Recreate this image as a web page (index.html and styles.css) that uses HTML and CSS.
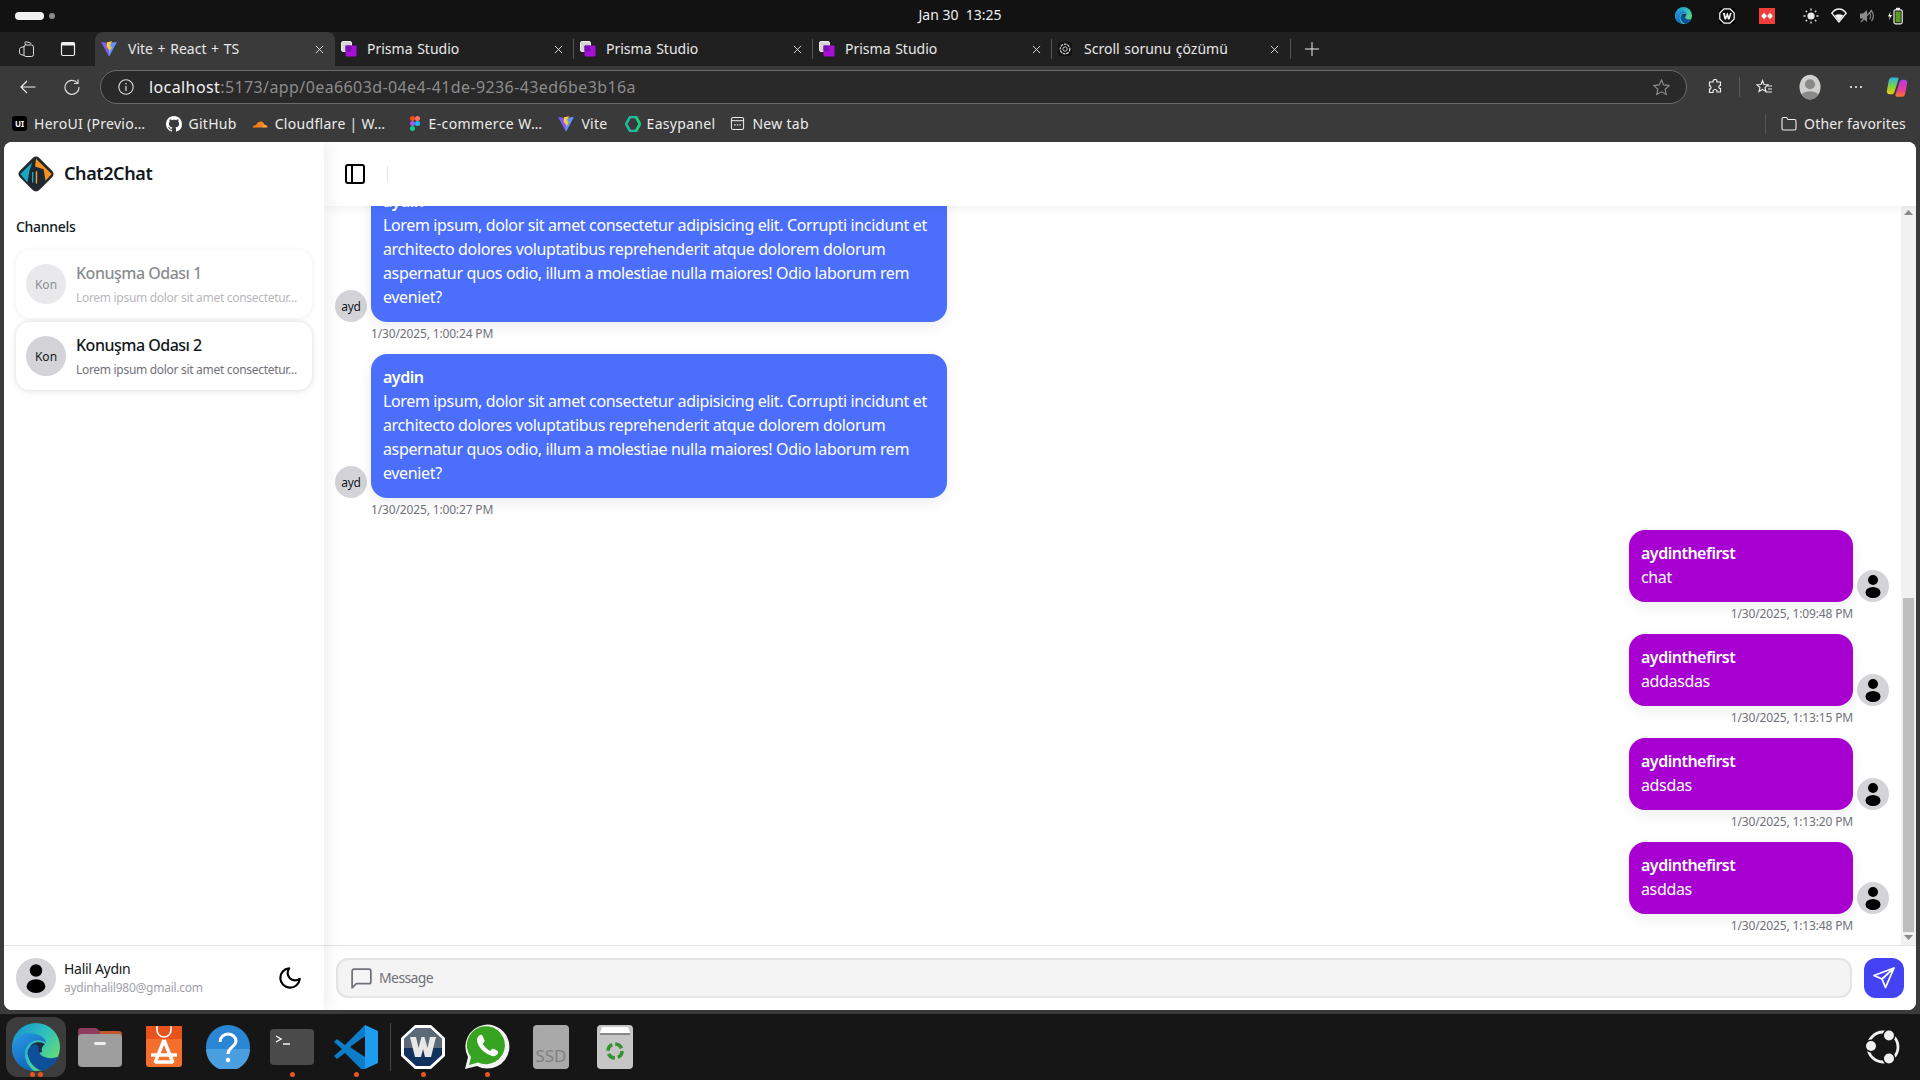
FILE: index.html
```html
<!DOCTYPE html>
<html lang="en">
<head>
<meta charset="utf-8">
<title>Chat2Chat</title>
<link rel="stylesheet" href="styles.css">
</head>
<body>
<svg class="defs" width="0" height="0">
  <defs>
    <linearGradient id="edgeA" x1="0" y1="0" x2="1" y2=".8"><stop offset="0" stop-color="#128fd6"/><stop offset=".55" stop-color="#32c2b8"/><stop offset="1" stop-color="#6fdf6a"/></linearGradient>
    <linearGradient id="edgeB" x1="0" y1="0" x2=".6" y2="1"><stop offset="0" stop-color="#2a9ae6"/><stop offset="1" stop-color="#0f62b8"/></linearGradient>
  </defs>
  <symbol id="vite" viewBox="0 0 16 16">
    <path d="M15.6 1.6 8.4 15a.5.5 0 0 1-.8 0L.4 1.6c-.2-.4.1-.8.5-.7L8 2.2l7.1-1.3c.4-.1.7.3.5.7z" fill="#7f5cf5"/>
    <path d="M8 2.2 15.1.9c.4-.1.7.3.5.7L8.4 15 8 14z" fill="#5aa8ff" opacity=".7"/>
    <path d="M11.3.2 6 1.2l-.3 5.6 1.500-.3-.3 2 1.500-.4-.4 3 3-5-1.700.3.600-2.100-1.600.3z" fill="#ffd028"/>
  </symbol>
  <symbol id="prisma" viewBox="0 0 16 16">
    <rect x=".5" y=".5" width="10" height="10" rx="1.5" fill="#d5d5d5" stroke="#eee"/>
    <rect x="4.5" y="4.5" width="11" height="11" rx="1" fill="#a80fd8"/>
    <rect x="4.5" y="4.5" width="6" height="6" fill="#7a10b0"/>
  </symbol>
  <symbol id="user" viewBox="0 0 24 24">
    <circle cx="12" cy="6" r="5" fill="#000"/>
    <ellipse cx="12" cy="18.500" rx="7.500" ry="5.500" fill="#000"/>
  </symbol>
  <symbol id="close" viewBox="0 0 10 10">
    <path d="M1 1l8 8M9 1l-8 8" stroke="#e8e8e8" stroke-width="1" fill="none"/>
  </symbol>
  <symbol id="edge" viewBox="0 0 48 48">
    <circle cx="24" cy="24" r="24" fill="url(#edgeA)"/>
    <path d="M18 24C20 19 28 18 33 21 30 23 29 26 30 29l-6 2C20 31 18 27 18 24z" fill="#1a2c44"/>
    <path d="M24 21c-6 1-10 6-8 12 2 8 8 13 14 15 8-2 14-8 17-15-5 3-13 3-18-1-2-2-3-4-2-7z" fill="#0e4f9a"/>
    <path d="M0 25C1 13 13 8 24 11c7 2 10 6 10 9C28 15 18 17 14 25c-3 7 0 17 8 23C9 47 0 37 0 25z" fill="url(#edgeB)"/>
  </symbol>
</svg>

<div class="topbar">
  <div class="workspaces"><span class="ws-pill"></span><span class="ws-dot"></span></div>
  <div class="clock">Jan 30&nbsp;&nbsp;13:25</div>
  <div class="tray">
    <svg class="tray-edge" width="17" height="17"><use href="#edge"/></svg>
    <svg class="tray-w" viewBox="0 0 16 16" width="16" height="16"><rect width="16" height="16" fill="#000"/><path d="M5 .8h6L15.200 5v6L11 15.200H5L.8 11V5z" fill="#111" stroke="#fff" stroke-width="1.200"/><path d="M3.800 5h2l1 3.800L8 5h.8l1.100 3.800L11 5h1.600l-2 6.500H9L8 8.600 7.200 11.500H5.600z" fill="#fff"/></svg>
    <svg class="tray-red" viewBox="0 0 16 16" width="16" height="16"><rect width="16" height="16" fill="#f23e3a"/><path d="M5 4.800 8 8l-3 3.200L2.200 8zM11 4.800 13.800 8 11 11.200 8.200 8z" fill="#fff"/></svg>
    <svg viewBox="0 0 16 16" width="16" height="16"><circle cx="8" cy="8" r="3.600" fill="#e9e9e9"/><path d="M8 .5v2M8 13.500v2M.5 8h2M13.500 8h2M2.700 2.700l1.400 1.400M11.900 11.900l1.400 1.400M2.700 13.300l1.400-1.400M11.900 4.100l1.400-1.400" stroke="#e9e9e9" stroke-width="1.300"/></svg>
    <svg viewBox="0 0 16 16" width="16" height="16"><path d="M8 14 .8 5.200C5-.4 11-.4 15.200 5.200z" fill="none" stroke="#f0f0f0" stroke-width="1.400"/><path d="M8 13 3.800 7.500c2.500-1.800 5.900-1.800 8.400 0z" fill="#f0f0f0"/></svg>
    <svg viewBox="0 0 16 16" width="16" height="16"><path d="M1 5.500h3L8 2v12L4 10.500H1z" fill="#8c8c8c"/><path d="M10.500 5c1.400 1.600 1.400 4.400 0 6M12.500 3c2.400 2.800 2.400 7.200 0 10M2 14 13 2" stroke="#8c8c8c" stroke-width="1.200" fill="none"/></svg>
    <svg viewBox="0 0 16 18" width="16" height="18"><path d="M3.500 4.500 1 9.500h2L1.800 13.500 5 8H3z" fill="#fff"/><rect x="7" y="2.800" width="8.200" height="14" rx="1.500" fill="none" stroke="#eee" stroke-width="1.200"/><rect x="9" y=".8" width="4" height="2" fill="#eee"/><rect x="8.500" y="4.500" width="5.200" height="10.800" fill="#5a9c1e"/></svg>
  </div>
</div>

<div class="browser">
  <div class="tabbar">
    <div class="tab-tools">
      <svg viewBox="0 0 16 16" width="16" height="16"><rect x="6" y="4" width="9.500" height="11.500" rx="2" fill="none" stroke="#ddd" stroke-width="1"/><path d="M6 5.500 2.500 6.800c-.8.300-1 .9-1 1.500v3.500c0 .8.300 1.200 1 1.500L6 14.500M7.500 4l-.5-2c-.2-.800.300-1.300 1-1.200l4 1c.6.200 1 .6 1.200 1.200" fill="none" stroke="#ddd" stroke-width="1"/></svg>
      <svg viewBox="0 0 16 16" width="16" height="16"><rect x="1.500" y="1.500" width="13" height="13" rx="1.500" fill="none" stroke="#eee" stroke-width="1.200"/><rect x="1.500" y="1.500" width="13" height="3" fill="#eee"/></svg>
    </div>
    <div class="tab tab-active">
      <svg class="fav" width="16" height="16"><use href="#vite"/></svg>
      <span class="tab-title">Vite + React + TS</span>
      <svg class="tab-x" width="9" height="9"><use href="#close"/></svg>
    </div>
    <div class="tab">
      <svg class="fav" width="16" height="16"><use href="#prisma"/></svg>
      <span class="tab-title">Prisma Studio</span>
      <svg class="tab-x" width="9" height="9"><use href="#close"/></svg>
    </div>
    <div class="tab">
      <svg class="fav" width="16" height="16"><use href="#prisma"/></svg>
      <span class="tab-title">Prisma Studio</span>
      <svg class="tab-x" width="9" height="9"><use href="#close"/></svg>
    </div>
    <div class="tab">
      <svg class="fav" width="16" height="16"><use href="#prisma"/></svg>
      <span class="tab-title">Prisma Studio</span>
      <svg class="tab-x" width="9" height="9"><use href="#close"/></svg>
    </div>
    <div class="tab tab-chat">
      <svg class="fav" viewBox="0 0 16 16" width="14" height="14"><rect width="16" height="16" rx="4" fill="#111"/><circle cx="8" cy="8" r="5.500" fill="none" stroke="#ddd" stroke-width="1.300" stroke-dasharray="3 1"/><circle cx="8" cy="8" r="2.500" fill="none" stroke="#ddd" stroke-width="1"/></svg>
      <span class="tab-title">Scroll sorunu çözümü</span>
      <svg class="tab-x" width="9" height="9"><use href="#close"/></svg>
    </div>
    <svg class="newtab" viewBox="0 0 14 14" width="14" height="14"><path d="M7 0v14M0 7h14" stroke="#eee" stroke-width="1"/></svg>
  </div>

  <div class="addressbar">
    <svg class="nav-back" viewBox="0 0 16 16" width="16" height="16"><path d="M15.500 8H1M7 2 1 8l6 6" fill="none" stroke="#eee" stroke-width="1.200"/></svg>
    <svg class="nav-reload" viewBox="0 0 16 16" width="16" height="16"><path d="M13.500 4A7 7 0 1 0 15 8" fill="none" stroke="#ddd" stroke-width="1.200"/><path d="M14 .5V4.500H10" fill="none" stroke="#ddd" stroke-width="1.200"/></svg>
    <div class="omnibox">
      <svg viewBox="0 0 16 16" width="16" height="16"><circle cx="8" cy="8" r="7.200" fill="none" stroke="#ddd" stroke-width="1.100"/><path d="M8 7v5M8 4v1.500" stroke="#ddd" stroke-width="1.200"/></svg>
      <div class="url"><span class="url-host">localhost</span>:5173/app/0ea6603d-04e4-41de-9236-43ed6be3b16a</div>
      <svg class="omni-star" viewBox="0 0 16 16" width="17" height="17"><path d="M8 1l2.100 4.600 5 .6-3.700 3.400 1 4.900L8 12.100l-4.400 2.400 1-4.900L.9 6.200l5-.6z" fill="none" stroke="#8b8b8b" stroke-width="1.100"/></svg>
    </div>
    <div class="addr-tools">
      <svg viewBox="0 0 16 16" width="16" height="16"><path d="M6 2.500a2 2 0 0 1 4 0V3h3.500v3.500c-2.200-.4-2.200 3.400 0 3V13H10v-.5a2 2 0 0 0-4 0v1H2.500V10c2 .4 2-3.400 0-3V3H6z" fill="none" stroke="#eee" stroke-width="1.200"/></svg>
      <span class="addr-sep"></span>
      <svg viewBox="0 0 16 16" width="16" height="16"><path d="M6.500 1.500 8 5.500l4 .3L9 8.500l1 4L6.500 10.300 3 12.500l1-4L1 5.800l4-.3zM11.500 7H16M12 10h4M9.500 13H16" fill="none" stroke="#eee" stroke-width="1.100"/></svg>
      <svg class="profile" viewBox="0 0 24 28" width="22" height="26"><clipPath id="pf"><ellipse cx="12" cy="14" rx="11.500" ry="13.500"/></clipPath><g clip-path="url(#pf)"><rect width="24" height="28" fill="#d0cfcd"/><circle cx="12" cy="11" r="5.500" fill="#8a8a88"/><ellipse cx="12" cy="25" rx="10" ry="6.500" fill="#8a8a88"/></g></svg>
      <svg class="more" viewBox="0 0 16 16" width="16" height="16"><circle cx="3" cy="8" r="1.100" fill="#eee"/><circle cx="8" cy="8" r="1.100" fill="#eee"/><circle cx="13" cy="8" r="1.100" fill="#eee"/></svg>
      <svg class="copilot" viewBox="0 0 24 24" width="22" height="24"><defs><linearGradient id="cpa" x1="0" y1="0" x2="0" y2="1"><stop offset="0" stop-color="#28b4e8"/><stop offset=".6" stop-color="#8ed22e"/><stop offset="1" stop-color="#f6c416"/></linearGradient><linearGradient id="cpb" x1="0" y1="0" x2="0" y2="1"><stop offset="0" stop-color="#b43ce6"/><stop offset=".6" stop-color="#e83c9e"/><stop offset="1" stop-color="#f47a24"/></linearGradient></defs><path d="M6 1.500h6c1.500 0 2 1 1.500 2.500L9 18c-.5 1.500-2 2-3 2H4c-2.500 0-3.500-2-3-4L3 5C3.500 3 4.500 1.500 6 1.500z" fill="url(#cpa)"/><path d="M18 22.500h-6c-1.500 0-2-1-1.500-2.500L15 6c.5-1.500 2-2 3-2h2c2.500 0 3.500 2 3 4l-2 11c-.5 2-1.500 3.500-3 3.500z" fill="url(#cpb)"/></svg>
    </div>
  </div>

  <div class="bookmarks">
    <div class="bm bm-hero"><span class="hero-icon">UI</span><span>HeroUI (Previo…</span></div>
    <div class="bm bm-github"><svg viewBox="0 0 16 16" width="16" height="16"><path fill="#fff" d="M8 0C3.580 0 0 3.580 0 8c0 3.540 2.290 6.530 5.470 7.590.4.070.55-.17.55-.38 0-.19-.01-.82-.01-1.490-2.010.370-2.530-.490-2.690-.940-.090-.230-.480-.940-.820-1.130-.280-.150-.680-.520-.010-.530.630-.010 1.080.580 1.230.820.720 1.210 1.870.870 2.330.660.070-.520.280-.870.510-1.070-1.780-.200-3.640-.890-3.640-3.950 0-.870.310-1.590.820-2.150-.080-.200-.360-1.020.080-2.120 0 0 .670-.210 2.200.820.640-.180 1.320-.270 2-.270s1.360.090 2 .270c1.530-1.040 2.200-.820 2.200-.820.440 1.100.160 1.920.080 2.120.510.560.820 1.270.820 2.150 0 3.070-1.870 3.750-3.650 3.950.290.250.540.730.540 1.480 0 1.070-.010 1.930-.010 2.200 0 .210.150.460.550.380A8.010 8.010 0 0 0 16 8c0-4.420-3.580-8-8-8z"/></svg><span>GitHub</span></div>
    <div class="bm bm-cf"><svg viewBox="0 0 16 16" width="16" height="16"><path d="M.5 11.500C1 9.500 3 9 4 9.300 5 6.500 8 4.500 10.500 6c1 .6 1.600 1.500 1.800 2.500L11 11.500z" fill="#f48120"/><path d="M10.500 11.500l.8-2.500c1.500-.8 4-.3 4.200 2.500z" fill="#fbad41"/></svg><span>Cloudflare | W…</span></div>
    <div class="bm bm-figma"><svg viewBox="0 0 12 16" width="12" height="16"><rect x="1" y="0" width="5" height="5" rx="2.500" fill="#f24e1e"/><rect x="6" y="0" width="5" height="5" rx="2.500" fill="#ff7262"/><rect x="1" y="5" width="5" height="5" rx="2.500" fill="#a259ff"/><circle cx="8.500" cy="7.500" r="2.500" fill="#1abcfe"/><rect x="1" y="10" width="5" height="5" rx="2.500" fill="#0acf83"/></svg><span>E-commerce W…</span></div>
    <div class="bm bm-vite"><svg width="16" height="16"><use href="#vite"/></svg><span>Vite</span></div>
    <div class="bm bm-easy"><svg viewBox="0 0 16 16" width="16" height="16"><path d="M5 1h6l4 7-4 7H5L1 8z" fill="none" stroke="#22b8a0" stroke-width="2.600"/><path d="M11 1l4 7-4 7" fill="none" stroke="#12d27a" stroke-width="2.600"/></svg><span>Easypanel</span></div>
    <div class="bm"><svg viewBox="0 0 16 16" width="15" height="15"><rect x="1.500" y="1.500" width="13" height="13" rx="2" fill="none" stroke="#eee" stroke-width="1.100"/><path d="M1.500 5h13" stroke="#eee" stroke-width="1.100"/><path d="M4.500 9.500h1.500M7.300 9.500h1.500M10 9.500h1.500" stroke="#eee" stroke-width="1.300"/></svg><span>New tab</span></div>
    <span class="bm-sep"></span>
    <div class="bm bm-other"><svg viewBox="0 0 16 16" width="16" height="16"><path d="M1 4V3c0-1 .5-1.500 1.500-1.500h3L7 3.500h6.500c1 0 1.500.5 1.500 1.500v7.500c0 1-.5 1.500-1.500 1.500h-11C1.500 14 1 13.500 1 12.500z" fill="none" stroke="#eee" stroke-width="1.100"/></svg><span>Other favorites</span></div>
  </div>

  <main class="window">
    <aside class="sidebar">
      <div class="brand">
        <svg class="logo" viewBox="0 0 40 40" width="38" height="38">
          <rect x="6.500" y="6.500" width="27" height="27" rx="4" transform="rotate(45 20 20)" fill="#1d2730" stroke="#2a2a30" stroke-width="2"/>
          <path d="M20 4 36.500 20 30 27 28 15 19 12z" fill="#f7931e"/>
          <path d="M16 8 3.500 20 11 29 13 17z" fill="#18a8c4"/>
          <path d="M20.500 17v13" stroke="#f0a040" stroke-width="1.500"/>
          <path d="M16.500 18v11" stroke="#18a8c4" stroke-width="1.500"/>
        </svg>
        <span class="brand-name">Chat2Chat</span>
      </div>
      <div class="channels">
        <div class="channels-label">Channels</div>
        <div class="channel channel-muted">
          <span class="avatar">Kon</span>
          <div class="channel-text">
            <div class="channel-name">Konuşma Odası 1</div>
            <div class="channel-sub">Lorem ipsum dolor sit amet consectetur...</div>
          </div>
        </div>
        <div class="channel">
          <span class="avatar">Kon</span>
          <div class="channel-text">
            <div class="channel-name">Konuşma Odası 2</div>
            <div class="channel-sub">Lorem ipsum dolor sit amet consectetur...</div>
          </div>
        </div>
      </div>
      <div class="account">
        <span class="avatar"><svg width="30" height="30"><use href="#user"/></svg></span>
        <div class="account-text">
          <div class="account-name">Halil Aydın</div>
          <div class="account-mail">aydinhalil980@gmail.com</div>
        </div>
        <svg class="moon" viewBox="0 0 24 24" width="26" height="26"><path d="M21 12.800A9 9 0 1 1 11.200 3 7 7 0 0 0 21 12.800z" fill="none" stroke="#000" stroke-width="2" stroke-linejoin="round"/></svg>
      </div>
    </aside>

    <section class="chat">
      <header class="chat-header">
        <svg viewBox="0 0 24 24" width="24" height="24"><rect x="3" y="3" width="18" height="18" rx="2" fill="none" stroke="#000" stroke-width="2"/><path d="M9 3v18" stroke="#000" stroke-width="2"/></svg>
        <span class="header-sep"></span>
      </header>
      <div class="chat-body">
        <div class="messages">
          <div class="msg">
            <div class="msg-row">
              <span class="avatar avatar-sm">ayd</span>
              <div class="bubble bubble-blue">
                <div class="bubble-name">aydin</div>
                <div class="bubble-text">Lorem ipsum, dolor sit amet consectetur adipisicing elit. Corrupti incidunt et<br>architecto dolores voluptatibus reprehenderit atque dolorem dolorum<br>aspernatur quos odio, illum a molestiae nulla maiores! Odio laborum rem<br>eveniet?</div>
              </div>
            </div>
            <div class="msg-time">1/30/2025, 1:00:24 PM</div>
          </div>
          <div class="msg">
            <div class="msg-row">
              <span class="avatar avatar-sm">ayd</span>
              <div class="bubble bubble-blue">
                <div class="bubble-name">aydin</div>
                <div class="bubble-text">Lorem ipsum, dolor sit amet consectetur adipisicing elit. Corrupti incidunt et<br>architecto dolores voluptatibus reprehenderit atque dolorem dolorum<br>aspernatur quos odio, illum a molestiae nulla maiores! Odio laborum rem<br>eveniet?</div>
              </div>
            </div>
            <div class="msg-time">1/30/2025, 1:00:27 PM</div>
          </div>
          <div class="msg msg-own">
            <div class="msg-row">
              <div class="bubble bubble-purple">
                <div class="bubble-name">aydinthefirst</div>
                <div class="bubble-text">chat</div>
              </div>
              <span class="avatar avatar-sm"><svg width="24" height="24"><use href="#user"/></svg></span>
            </div>
            <div class="msg-time">1/30/2025, 1:09:48 PM</div>
          </div>
          <div class="msg msg-own">
            <div class="msg-row">
              <div class="bubble bubble-purple">
                <div class="bubble-name">aydinthefirst</div>
                <div class="bubble-text">addasdas</div>
              </div>
              <span class="avatar avatar-sm"><svg width="24" height="24"><use href="#user"/></svg></span>
            </div>
            <div class="msg-time">1/30/2025, 1:13:15 PM</div>
          </div>
          <div class="msg msg-own">
            <div class="msg-row">
              <div class="bubble bubble-purple">
                <div class="bubble-name">aydinthefirst</div>
                <div class="bubble-text">adsdas</div>
              </div>
              <span class="avatar avatar-sm"><svg width="24" height="24"><use href="#user"/></svg></span>
            </div>
            <div class="msg-time">1/30/2025, 1:13:20 PM</div>
          </div>
          <div class="msg msg-own">
            <div class="msg-row">
              <div class="bubble bubble-purple">
                <div class="bubble-name">aydinthefirst</div>
                <div class="bubble-text">asddas</div>
              </div>
              <span class="avatar avatar-sm"><svg width="24" height="24"><use href="#user"/></svg></span>
            </div>
            <div class="msg-time">1/30/2025, 1:13:48 PM</div>
          </div>
        </div>
        <div class="scrollbar">
          <svg class="sb-arrow sb-up" viewBox="0 0 9 5" width="9" height="5"><path d="M0 5 4.500 0 9 5z" fill="#8a8a8a"/></svg>
          <div class="sb-thumb"></div>
          <svg class="sb-arrow sb-down" viewBox="0 0 9 5" width="9" height="5"><path d="M0 0 4.500 5 9 0z" fill="#8a8a8a"/></svg>
        </div>
      </div>
      <footer class="composer">
        <div class="composer-input">
          <svg viewBox="0 0 24 24" width="25" height="25"><path d="M21 15a2 2 0 0 1-2 2H7l-4 4V5a2 2 0 0 1 2-2h14a2 2 0 0 1 2 2z" fill="none" stroke="#71717a" stroke-width="1.700" stroke-linejoin="round"/></svg>
          <span class="composer-placeholder">Message</span>
        </div>
        <button class="send" type="button" aria-label="Send">
          <svg viewBox="0 0 24 24" width="24" height="24"><path d="M22 2 2 9.500l8 3.500 3.500 8.500zM22 2 10 13" fill="none" stroke="#fff" stroke-width="1.800" stroke-linejoin="round" stroke-linecap="round"/></svg>
        </button>
      </footer>
    </section>
  </main>
</div>

<nav class="dock">
  <div class="dock-item dock-active">
    <svg width="48" height="48"><use href="#edge"/></svg>
    <span class="dots"><i></i><i></i></span>
  </div>
  <div class="dock-item">
    <svg viewBox="0 0 44 44" width="44" height="44"><path d="M0 6c0-2 1-3 3-3h15l4 3h18c2 0 4 1 4 3v14H0z" fill="#8d3c5c"/><path d="M22 6h18c2 0 4 1 4 3v4H22z" fill="#c0582e"/><rect y="9" width="44" height="33" rx="4" fill="#9e9e9e"/><rect x="16" y="17" width="12" height="3" rx="1.500" fill="#eee"/></svg>
  </div>
  <div class="dock-item">
    <svg viewBox="0 0 36 44" width="36" height="44"><rect y="1" width="36" height="41" rx="3" fill="#f46f2c"/><rect y="1" width="36" height="13" fill="#e8531d"/><path d="M11 1v4a7 7 0 0 0 14 0V1" fill="none" stroke="#fff" stroke-width="1.600"/><path d="M18 15 9 38M18 15l9 23M5 30h26M9 37h18" stroke="#fff" stroke-width="3.500" fill="none"/></svg>
  </div>
  <div class="dock-item">
    <svg viewBox="0 0 44 44" width="44" height="44"><circle cx="22" cy="22" r="22" fill="#2a85d5"/><path d="M0 24h44a22 22 0 0 1-44 0z" fill="#4a9fe0"/><path d="M14 17c0-5 4-8 8-8s8 3 8 7c0 6-8 6-8 13" fill="none" stroke="#fff" stroke-width="3"/><circle cx="22" cy="35" r="2.200" fill="#fff"/></svg>
  </div>
  <div class="dock-item">
    <svg viewBox="0 0 44 36" width="44" height="36"><rect width="44" height="36" rx="4" fill="#4a4a4a"/><path d="M6 7l5 3-5 3" fill="none" stroke="#fff" stroke-width="1.400"/><path d="M13 15h7" stroke="#fff" stroke-width="1.400"/></svg>
    <span class="dots"><i></i></span>
  </div>
  <div class="dock-item">
    <svg viewBox="0 0 44 44" width="44" height="44"><path d="M31 0 44 6v32l-13 6V0z" fill="#1f9cf0"/><path d="M31 0 11 20 3 14l-3 3 8 7-8 7 3 3 8-6 20 20V32L16 22 31 11z" fill="#0d7dc9"/></svg>
    <span class="dots"><i></i></span>
  </div>
  <span class="dock-sep"></span>
  <div class="dock-item">
    <svg viewBox="0 0 46 46" width="46" height="46"><path d="M15 1h16l14 13v18L31 45H15L1 32V14z" fill="#fff"/><path d="M16 4h14l12 11v16L30 42H16L4 31V15z" fill="#12325e"/><path d="M16 4h14l12 11v9H4v-9z" fill="#5c6a78"/><path d="M10 13h6l2.500 11 3-11h3l3 11L30 13h6l-5 20h-6l-2-8-2 8h-6z" fill="#e8e8e8"/></svg>
    <span class="dots"><i></i></span>
  </div>
  <div class="dock-item">
    <svg viewBox="0 0 46 46" width="46" height="46"><path d="M1 45l3-12A22 22 0 1 1 13 42z" fill="#f4f4f4"/><path d="M5 41l2-8A19 19 0 1 1 14 38.500z" fill="#36a420"/><path d="M16 11c-2 1-3 3-3 5 0 3 2 7 5 10s7 5 10 6c3 .6 5-1 6-3 .2-1.200 0-2-1-2.500l-3.500-1.700c-1-.4-1.600 0-2 .6l-1.200 1.500c-2-.7-6.500-4.500-7.500-7.500l1.300-1.300c.6-.7.7-1.200.3-2L18.600 12c-.4-1-1.400-1.400-2.600-1z" fill="#fff"/></svg>
    <span class="dots"><i></i></span>
  </div>
  <div class="dock-item">
    <div class="ssd">SSD</div>
  </div>
  <div class="dock-item">
    <svg viewBox="0 0 36 44" width="36" height="44"><rect width="36" height="44" rx="4" fill="#c6c6c6"/><path d="M5 2h26l2 6H3z" fill="#fff"/><path d="M3 8h30v2H3z" fill="#888"/><g fill="none" stroke="#35932f" stroke-width="3.500" stroke-dasharray="8 3"><circle cx="18" cy="26" r="7"/></g></svg>
  </div>
  <div class="dock-logo">
    <svg viewBox="0 0 36 36" width="36" height="36"><circle cx="18" cy="18" r="15" fill="none" stroke="#f0f0f0" stroke-width="2.800"/><circle cx="6" cy="17" r="6.500" fill="#161616"/><circle cx="24" cy="6.500" r="6.500" fill="#161616"/><circle cx="24" cy="29.500" r="6.500" fill="#161616"/><circle cx="6" cy="17" r="5" fill="#f0f0f0"/><circle cx="24" cy="6.500" r="5" fill="#f0f0f0"/><circle cx="24" cy="29.500" r="5" fill="#f0f0f0"/></svg>
  </div>
</nav>
</body>
</html>
```

FILE: styles.css
```css
* { box-sizing: border-box; }
html, body { margin: 0; padding: 0; }
body {
  width: 1920px;
  height: 1080px;
  overflow: hidden;
  display: flex;
  flex-direction: column;
  background: #161616;
  font-family: "Noto Sans", "Liberation Sans", sans-serif;
  color: #11181c;
}
.defs { display: block; width: 0; height: 0; }
svg { display: block; flex: none; }

/* system bar */
.topbar {
  height: 32px;
  flex: none;
  background: #121212;
  display: grid;
  grid-template-columns: 1fr auto 1fr;
  align-items: center;
  color: #eee;
}
.workspaces { display: flex; align-items: center; gap: 5px; padding-left: 15px; }
.ws-pill { width: 29px; height: 8px; border-radius: 4px; background: #f2f2f2; }
.ws-dot { width: 6px; height: 6px; border-radius: 50%; background: #8a8a8a; }
.clock { font-size: 14px; padding-bottom: 3px; }
.tray { display: flex; align-items: center; justify-content: flex-end; gap: 12px; padding-right: 17px; padding-bottom: 1px; }
.tray-edge { margin-right: 15px; }
.tray-w { margin-right: 12px; }
.tray-red { margin-right: 16px; }

/* browser */
.browser { flex: none; height: 982px; background: #3a3a3a; display: flex; flex-direction: column; }
.tabbar { height: 34px; flex: none; background: #202020; display: flex; align-items: stretch; color: #e8e8e8; font-size: 14px; }
.tab-tools { width: 95px; flex: none; display: flex; align-items: center; gap: 26px; padding-left: 18px; }
.tab {
  width: 239px;
  flex: none;
  display: flex;
  align-items: center;
  padding-left: 6px;
  gap: 10px;
}
.tab::after { content: ""; width: 1px; height: 20px; background: #555; flex: none; }
.tab-active { background: #3a3a3a; border-radius: 8px 8px 0 0; width: 240px; }
.tab-active::after { background: transparent; }
.tab-active .fav { margin-right: 1px; }
.tab-chat { gap: 12px; }
.tab-chat .tab-x { margin-right: -1px; }
.tab .tab-title { flex: 1; white-space: nowrap; word-spacing: 1px; padding-bottom: 2px; }

.newtab { align-self: center; margin-left: 14px; }

.addressbar { height: 41px; flex: none; background: #3a3a3a; display: flex; align-items: center; padding: 1px 0 0 20px; }
.nav-reload { margin-left: 28px; }
.omnibox {
  margin-left: 20px;
  width: 1587px;
  height: 34px;
  border: 1px solid #6b6b6b;
  border-radius: 17px;
  background: #292929;
  display: flex;
  align-items: center;
  padding: 0 16px 0 17px;
}
.url { flex: 1; margin-left: 15px; font-size: 16px; color: #8c8c8c; letter-spacing: 0.4px; white-space: nowrap; }
.url-host { color: #f2f2f2; }
.addr-tools { display: flex; align-items: center; padding-left: 20px; }
.addr-sep { width: 1px; height: 20px; background: #5a5a5a; margin: 0 16px; }
.profile { margin-left: 27px; margin-right: 27px; }
.copilot { margin-left: 22px; }

.bookmarks { height: 35px; flex: none; background: #3a3a3a; display: flex; align-items: center; color: #ececec; font-size: 14px; letter-spacing: 0.3px; padding: 0 0 2px 12px; }
.bm { display: flex; align-items: center; gap: 7px; white-space: nowrap; margin-right: 18px; }
.bm-hero { margin-right: 21px; }
.bm-github { gap: 6px; margin-right: 15px; }
.bm-cf { margin-right: 19px; }
.bm-figma { margin-left: 5px; letter-spacing: 0.4px; margin-right: 16px; }
.bm-vite { margin-right: 17px; }
.bm-easy { gap: 6px; margin-right: 15px; }
.hero-icon { width: 15px; height: 15px; border-radius: 3px; background: #000; color: #fff; font-size: 8px; font-weight: 700; display: flex; align-items: center; justify-content: center; letter-spacing: 0; }
.bm-sep { width: 1px; height: 20px; background: #555; margin-left: auto; margin-right: 15px; }
.bm-other { margin-right: 14px; letter-spacing: 0.18px; }

/* app window */
.window {
  flex: none;
  height: 868px;
  margin: 0 4px;
  background: #fff;
  border-radius: 8px;
  display: flex;
  overflow: hidden;
}
.sidebar {
  width: 320px;
  flex: none;
  display: flex;
  flex-direction: column;
  background: #fff;
  box-shadow: 0 0 20px rgba(0,0,0,.1);
  position: relative;
  z-index: 2;
}
.brand { height: 64px; flex: none; display: flex; align-items: center; gap: 9px; padding-left: 13px; }
.brand-name { font-size: 18px; font-weight: 600; letter-spacing: -0.4px; color: #11181c; padding-bottom: 2px; }
.channels { flex: 1; padding: 12px 12px 0; display: flex; flex-direction: column; gap: 4px; }
.channels-label { font-size: 14px; font-weight: 500; letter-spacing: -0.3px; line-height: 18px; margin-bottom: 10px; }
.channel {
  height: 68px;
  flex: none;
  border-radius: 14px;
  background: #fff;
  box-shadow: 0 0 5px rgba(0,0,0,.1), 0 2px 8px rgba(0,0,0,.06);
  display: flex;
  align-items: center;
  gap: 10px;
  padding: 0 10px;
}
.channel-muted .avatar, .channel-muted .channel-text { opacity: .5; }
.channel-muted { box-shadow: 0 0 5px rgba(0,0,0,.05), 0 2px 8px rgba(0,0,0,.03); }
.avatar {
  width: 40px;
  height: 40px;
  flex: none;
  border-radius: 50%;
  background: #d4d4d8;
  color: #11181c;
  font-size: 12px;
  display: flex;
  align-items: center;
  justify-content: center;
}
.avatar-sm { width: 32px; height: 32px; letter-spacing: -0.2px; }
.channel-text { flex: 1; min-width: 0; padding-bottom: 1px; }
.channel-name { font-size: 16px; font-weight: 500; letter-spacing: -0.5px; line-height: 24px; margin-bottom: 5px; }
.channel-sub { font-size: 12px; line-height: 16px; color: #71717a; white-space: nowrap; letter-spacing: -0.3px; }
.account { height: 65px; flex: none; border-top: 1px solid #e4e4e7; display: flex; align-items: center; padding: 0 12px; gap: 8px; }
.account-text { flex: 1; padding-bottom: 1px; }
.account-name { font-size: 14px; line-height: 20px; letter-spacing: -0.3px; margin-bottom: 1px; }
.account-mail { font-size: 12px; line-height: 16px; color: #a1a1aa; letter-spacing: -0.25px; }
.moon { margin-right: 9px; }

.chat { flex: 1; min-width: 0; display: flex; flex-direction: column; }
.chat-header {
  height: 64px;
  flex: none;
  background: #fff;
  display: flex;
  align-items: center;
  padding-left: 19px;
  gap: 20px;
  box-shadow: 0 2px 8px rgba(0,0,0,.06);
  position: relative;
  z-index: 1;
}
.header-sep { width: 1px; height: 16px; background: #e4e4e7; }
.chat-body { flex: 1; min-height: 0; display: flex; }
.messages {
  flex: 1;
  min-width: 0;
  overflow: hidden;
  display: flex;
  flex-direction: column;
  justify-content: flex-end;
  gap: 12px;
  padding: 0 12px 11px 11px;
}
.msg { flex: none; display: flex; flex-direction: column; }
.msg-row { display: flex; align-items: flex-end; gap: 4px; }
.msg-own { align-items: flex-end; }
.bubble {
  padding: 11px 12px 13px;
  border-radius: 16px;
  color: #fff;
  font-size: 16px;
  line-height: 24px;
  letter-spacing: -0.36px;
  white-space: nowrap;
  box-shadow: 0 4px 14px rgba(0,0,0,.08);
}
.bubble-blue { width: 576px; background: #4b6ffb; }
.bubble-purple { width: 224px; background: #a700d1; }
.bubble-name { font-weight: 600; letter-spacing: -0.5px; }
.msg-time { margin-top: 4px; padding-left: 36px; font-size: 12px; line-height: 16px; color: #71717a; letter-spacing: -0.15px; }
.msg-own .msg-time { padding: 0 36px 0 0; }
.scrollbar { width: 15px; flex: none; background: #f1f1f1; display: flex; flex-direction: column; align-items: center; padding-top: 4px; }
.sb-up { margin-bottom: auto; }
.sb-thumb { width: 11px; height: 334px; background: #bebebe; }
.sb-down { margin: 3px 0 5px; }

.composer { height: 65px; flex: none; border-top: 1px solid #e4e4e7; background: #fff; display: flex; align-items: center; padding: 0 12px; gap: 12px; }
.composer-input {
  flex: 1;
  height: 40px;
  border: 2px solid #e4e4e7;
  border-radius: 12px;
  background: #f4f4f5;
  display: flex;
  align-items: center;
  gap: 5px;
  padding-left: 11px;
}
.composer-placeholder { font-size: 14px; color: #71717a; letter-spacing: -0.6px; padding-bottom: 2px; }
.send { width: 40px; height: 40px; flex: none; border: 0; border-radius: 12px; background: #4343f4; display: flex; align-items: center; justify-content: center; padding: 0; }

/* dock */
.dock { flex: 1; background: #161616; display: flex; align-items: center; padding-left: 4px; }
.dock-item { width: 64px; height: 60px; flex: none; display: flex; align-items: center; justify-content: center; position: relative; border-radius: 12px; }
.dock-active { background: #3c3c3c; width: 60px; margin: 0 2px; }
.dots { position: absolute; bottom: 0; left: 0; right: 0; display: flex; justify-content: center; gap: 3px; }
.dots i { width: 5px; height: 5px; border-radius: 50%; background: #e95420; }
.dock-sep { width: 1px; height: 48px; background: #444; margin: 0 0 0 2px; }
.ssd {
  width: 36px;
  height: 44px;
  border-radius: 4px;
  background: #a9a9a9;
  color: #808080;
  font-size: 17px;
  display: flex;
  align-items: flex-end;
  justify-content: center;
  line-height: 22px;
  padding-bottom: 2px;
}
.dock-logo { margin-left: auto; margin-right: 19px; }
```
